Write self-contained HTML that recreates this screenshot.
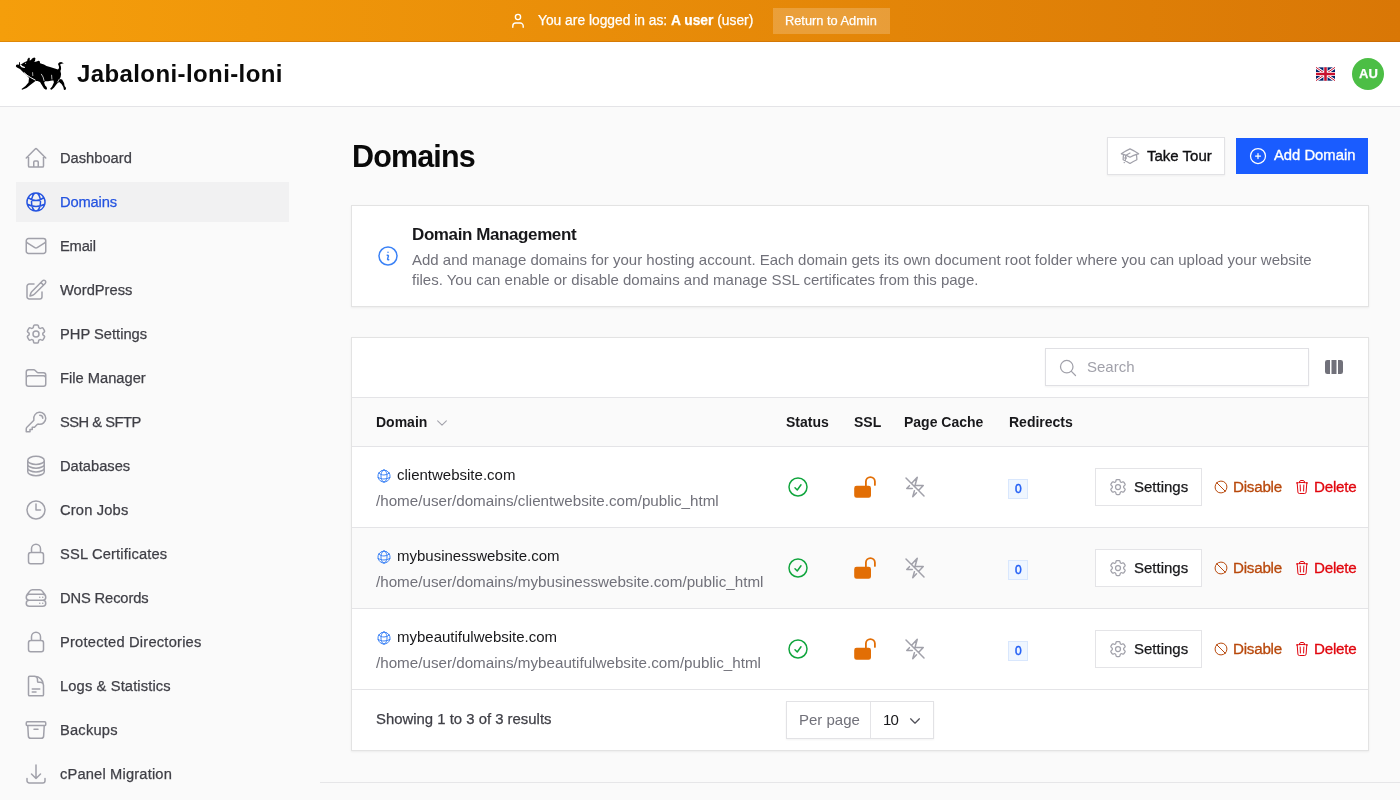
<!DOCTYPE html>
<html><head><meta charset="utf-8"><title>Domains</title>
<style>
*{box-sizing:border-box;margin:0;padding:0}
html,body{width:1400px;height:800px;overflow:hidden}
body{font-family:"Liberation Sans",sans-serif;background:#fafafa;position:relative;color:#18181b}
.a{position:absolute;display:block}
.t{position:absolute;white-space:nowrap;line-height:1;will-change:transform}
</style></head><body>
<div class="a" style="left:0px;top:0px;width:1400px;height:42px;background:linear-gradient(90deg,#f59e0b 0%,#d97706 100%)"></div>
<div class="a" style="left:0px;top:41px;width:1400px;height:1px;background:rgba(160,70,0,.25)"></div>
<svg class="a" style="left:510px;top:12px" width="16" height="17" viewBox="0 0 16 17" fill="none" stroke="#fff" stroke-width="1.4" stroke-linecap="round"><circle cx="8" cy="5" r="2.6"/><path d="M2.8 15.2v-1.2a3 3 0 0 1 3-3h4.4a3 3 0 0 1 3 3v1.2"/></svg>
<div class="t" style="left:538px;top:14.32px;font-size:13.8px;color:#fff;font-weight:normal;letter-spacing:0px;-webkit-text-stroke:0.25px currentColor;">You are logged in as: <b>A user</b> (user)</div>
<div class="a" style="left:773px;top:8px;width:117px;height:26px;background:rgba(255,255,255,.2)"></div>
<div class="t" style="left:785px;top:14.96px;font-size:12.8px;color:#fff;font-weight:normal;letter-spacing:0px;-webkit-text-stroke:0.25px currentColor;">Return to Admin</div>
<div class="a" style="left:0px;top:42px;width:1400px;height:65px;background:#fff;border-bottom:1px solid #e4e4e7"></div>
<svg class="a" style="left:14px;top:54px" width="56" height="40" viewBox="0 0 1120 800">
<path fill="#000" d="M40 225 L60 212 L98 214 L106 160 L118 162 L122 212 L145 205 L200 170 L262 140 L272 100 L300 72 L318 88 L312 128 L340 118 L362 88 L402 68 L428 80 L422 128 L405 160 L450 148 L492 133 L515 147 L522 183 L600 210 L650 238 L720 258 L800 283 L880 308 L902 282 L896 240 L880 202 L902 168 L942 158 L998 186 L950 196 L922 212 L938 252 L942 302 L928 342 L942 400 L932 460 L912 498 L962 508 L1002 578 L1012 638 L1042 678 L1032 716 L1000 722 L986 662 L950 602 L902 562 L862 592 L802 672 L752 716 L720 702 L762 650 L798 572 L790 532 L760 530 L680 545 L620 547 L602 570 L622 630 L652 660 L662 700 L640 716 L600 692 L550 612 L520 562 L470 542 L430 542 L350 602 L250 680 L162 716 L150 702 L230 640 L290 570 L300 482 L250 422 L190 372 L120 302 L60 272 L38 250 Z"/>
<path fill="none" stroke="#fff" stroke-width="28" stroke-linecap="round" d="M132 222 Q150 262 205 268"/>
<circle cx="232" cy="186" r="11" fill="#fff"/>
<path fill="none" stroke="#fff" stroke-width="20" stroke-linecap="round" d="M205 375 L262 425 L335 472 L425 522"/>
<path fill="none" stroke="#fff" stroke-width="15" stroke-linecap="round" d="M548 405 L582 462 L600 530"/>
<path fill="none" stroke="#fff" stroke-width="14" stroke-linecap="round" d="M752 425 L758 500"/>
<path fill="none" stroke="#fff" stroke-width="13" stroke-linecap="round" d="M372 372 L376 432"/>
<path fill="none" stroke="#fff" stroke-width="14" stroke-linecap="round" d="M905 505 L872 560"/>
</svg>
<div class="t" style="left:76.5px;top:61.68px;font-size:24px;color:#0a0a0a;font-weight:bold;letter-spacing:0.4px;">Jabaloni-loni-loni</div>
<svg class="a" style="left:1316px;top:67px" width="19" height="14" viewBox="0 0 60 42"><rect width="60" height="42" fill="#012169"/><path d="M0 0L60 42M60 0L0 42" stroke="#fff" stroke-width="9"/><path d="M0 0L60 42M60 0L0 42" stroke="#C8102E" stroke-width="3"/><path d="M30 0V42M0 21H60" stroke="#fff" stroke-width="13"/><path d="M30 0V42M0 21H60" stroke="#C8102E" stroke-width="8"/></svg>
<div class="a" style="left:1352px;top:58px;width:32px;height:32px;background:#4cbe45;border-radius:50%"></div>
<div class="t" style="left:1358.5px;top:67.00px;font-size:13px;color:#fff;font-weight:bold;letter-spacing:0px;-webkit-text-stroke:0.25px currentColor;">AU</div>
<svg class="a" style="left:24px;top:146px;" width="24" height="24" viewBox="0 0 24 24" fill="none" stroke="#a1a1aa" stroke-width="1.5" stroke-linecap="round" stroke-linejoin="round"><path d="m2.25 12 8.954-8.955c.44-.439 1.152-.439 1.591 0L21.75 12M4.5 9.75v10.125c0 .621.504 1.125 1.125 1.125H9.750v-4.875c0-.621.504-1.125 1.125-1.125h2.25c.621 0 1.125.504 1.125 1.125V21h4.125c.621 0 1.125-.504 1.125-1.125V9.75M8.25 21h8.25"/></svg>
<div class="t" style="left:59.5px;top:150.56px;font-size:14.7px;color:#3f3f46;font-weight:normal;letter-spacing:0px;-webkit-text-stroke:0.25px currentColor;">Dashboard</div>
<div class="a" style="left:16px;top:182px;width:273px;height:40px;background:#f1f1f2"></div>
<svg class="a" style="left:24px;top:190px;" width="24" height="24" viewBox="0 0 24 24" fill="none" stroke="#2453e0" stroke-width="1.5" stroke-linecap="round" stroke-linejoin="round"><path d="M12 21a9.004 9.004 0 0 0 8.716-6.747M12 21a9.004 9.004 0 0 1-8.716-6.747M12 21c2.485 0 4.5-4.03 4.5-9S14.485 3 12 3m0 18c-2.485 0-4.5-4.030-4.5-9S9.515 3 12 3m0 0a8.997 8.997 0 0 1 7.843 4.582M12 3a8.997 8.997 0 0 0-7.843 4.582m15.686 0A11.953 11.953 0 0 1 12 10.5c-2.998 0-5.740-1.1-7.843-2.918m15.686 0A8.959 8.959 0 0 1 21 12c0 .778-.099 1.533-.284 2.253m0 0A17.919 17.919 0 0 1 12 16.5c-3.162 0-6.133-.815-8.716-2.247m0 0A9.015 9.015 0 0 1 3 12c0-1.605.42-3.113 1.157-4.418"/></svg>
<div class="t" style="left:59.5px;top:194.56px;font-size:14.7px;color:#2453e0;font-weight:normal;letter-spacing:-0.14px;-webkit-text-stroke:0.25px currentColor;">Domains</div>
<svg class="a" style="left:24px;top:234px;" width="24" height="24" viewBox="0 0 24 24" fill="none" stroke="#a1a1aa" stroke-width="1.5" stroke-linecap="round" stroke-linejoin="round"><path d="M21.75 6.75v10.5a2.25 2.25 0 0 1-2.25 2.25h-15a2.25 2.25 0 0 1-2.25-2.25V6.75m19.5 0A2.25 2.25 0 0 0 19.5 4.5h-15a2.25 2.25 0 0 0-2.25 2.25m19.5 0v.243a2.25 2.25 0 0 1-1.07 1.916l-7.5 4.615a2.25 2.25 0 0 1-2.36 0L3.32 8.91a2.25 2.25 0 0 1-1.07-1.916V6.75"/></svg>
<div class="t" style="left:59.5px;top:238.56px;font-size:14.7px;color:#3f3f46;font-weight:normal;letter-spacing:-0.2px;-webkit-text-stroke:0.25px currentColor;">Email</div>
<svg class="a" style="left:24px;top:278px;" width="24" height="24" viewBox="0 0 24 24" fill="none" stroke="#a1a1aa" stroke-width="1.5" stroke-linecap="round" stroke-linejoin="round"><path d="m16.862 4.487 1.687-1.688a1.875 1.875 0 1 1 2.652 2.652L10.582 16.07a4.5 4.5 0 0 1-1.897 1.13L6 18l.8-2.685a4.5 4.5 0 0 1 1.13-1.897l8.932-8.931Zm0 0L19.5 7.125M18 14v4.75A2.25 2.25 0 0 1 15.75 21H5.25A2.25 2.25 0 0 1 3 18.75V8.25A2.25 2.25 0 0 1 5.25 6H10"/></svg>
<div class="t" style="left:59.5px;top:282.56px;font-size:14.7px;color:#3f3f46;font-weight:normal;letter-spacing:0px;-webkit-text-stroke:0.25px currentColor;">WordPress</div>
<svg class="a" style="left:24px;top:322px;" width="24" height="24" viewBox="0 0 24 24" fill="none" stroke="#a1a1aa" stroke-width="1.5" stroke-linecap="round" stroke-linejoin="round"><path d="M9.594 3.94c.09-.542.56-.94 1.11-.94h2.593c.55 0 1.02.398 1.11.94l.213 1.281c.063.374.313.686.645.87.074.04.147.083.22.127.325.196.72.257 1.075.124l1.217-.456a1.125 1.125 0 0 1 1.37.49l1.296 2.247a1.125 1.125 0 0 1-.26 1.431l-1.003.827c-.293.241-.438.613-.43.992a7.723 7.723 0 0 1 0 .255c-.008.378.137.75.43.991l1.004.827c.424.35.534.955.26 1.43l-1.298 2.247a1.125 1.125 0 0 1-1.369.491l-1.217-.456c-.355-.133-.75-.072-1.076.124a6.47 6.47 0 0 1-.22.128c-.331.183-.581.495-.644.869l-.213 1.281c-.09.543-.56.94-1.110.94h-2.594c-.55 0-1.019-.398-1.11-.94l-.213-1.281c-.062-.374-.312-.686-.644-.87a6.52 6.52 0 0 1-.22-.127c-.325-.196-.72-.257-1.076-.124l-1.217.456a1.125 1.125 0 0 1-1.369-.49l-1.297-2.247a1.125 1.125 0 0 1 .26-1.431l1.004-.827c.292-.24.437-.613.43-.991a6.932 6.932 0 0 1 0-.255c.007-.38-.138-.751-.43-.992l-1.004-.827a1.125 1.125 0 0 1-.26-1.43l1.297-2.247a1.125 1.125 0 0 1 1.37-.491l1.216.456c.356.133.751.072 1.076-.124.072-.044.146-.086.22-.128.332-.183.582-.495.644-.869l.214-1.28Z M15 12a3 3 0 1 1-6 0 3 3 0 0 1 6 0Z"/></svg>
<div class="t" style="left:59.5px;top:326.56px;font-size:14.7px;color:#3f3f46;font-weight:normal;letter-spacing:0px;-webkit-text-stroke:0.25px currentColor;">PHP Settings</div>
<svg class="a" style="left:24px;top:366px;" width="24" height="24" viewBox="0 0 24 24" fill="none" stroke="#a1a1aa" stroke-width="1.5" stroke-linecap="round" stroke-linejoin="round"><path d="M2.25 12.75V12A2.25 2.25 0 0 1 4.5 9.75h15A2.25 2.25 0 0 1 21.75 12v.75m-8.69-6.44-2.12-2.12a1.5 1.5 0 0 0-1.061-.44H4.5A2.25 2.25 0 0 0 2.25 6v12a2.25 2.25 0 0 0 2.25 2.25h15A2.25 2.25 0 0 0 21.75 18V9a2.25 2.25 0 0 0-2.25-2.25h-5.379a1.5 1.5 0 0 1-1.06-.44Z"/></svg>
<div class="t" style="left:59.5px;top:370.56px;font-size:14.7px;color:#3f3f46;font-weight:normal;letter-spacing:0px;-webkit-text-stroke:0.25px currentColor;">File Manager</div>
<svg class="a" style="left:24px;top:410px;" width="24" height="24" viewBox="0 0 24 24" fill="none" stroke="#a1a1aa" stroke-width="1.5" stroke-linecap="round" stroke-linejoin="round"><path d="M15.75 5.25a3 3 0 0 1 3 3m3 0a6 6 0 0 1-7.029 5.912c-.563-.097-1.159.026-1.563.43L10.5 17.25H8.25v2.25H6v2.25H2.25v-2.818c0-.597.237-1.17.659-1.591l6.499-6.499c.404-.404.527-1 .43-1.563A6 6 0 1 1 21.75 8.25Z"/></svg>
<div class="t" style="left:59.5px;top:414.56px;font-size:14.7px;color:#3f3f46;font-weight:normal;letter-spacing:-0.5px;-webkit-text-stroke:0.25px currentColor;">SSH &amp; SFTP</div>
<svg class="a" style="left:24px;top:454px;" width="24" height="24" viewBox="0 0 24 24" fill="none" stroke="#a1a1aa" stroke-width="1.5" stroke-linecap="round" stroke-linejoin="round"><path d="M20.25 6.375c0 2.278-3.694 4.125-8.25 4.125S3.75 8.653 3.75 6.375m16.5 0c0-2.278-3.694-4.125-8.25-4.125S3.75 4.097 3.75 6.375m16.5 0v11.25c0 2.278-3.694 4.125-8.25 4.125s-8.25-1.847-8.25-4.125V6.375m16.5 0v3.75m-16.5-3.75v3.75m16.5 0v3.75C20.25 16.153 16.556 18 12 18s-8.25-1.847-8.25-4.125v-3.75m16.5 0c0 2.278-3.694 4.125-8.25 4.125s-8.25-1.847-8.25-4.125"/></svg>
<div class="t" style="left:59.5px;top:458.56px;font-size:14.7px;color:#3f3f46;font-weight:normal;letter-spacing:0px;-webkit-text-stroke:0.25px currentColor;">Databases</div>
<svg class="a" style="left:24px;top:498px;" width="24" height="24" viewBox="0 0 24 24" fill="none" stroke="#a1a1aa" stroke-width="1.5" stroke-linecap="round" stroke-linejoin="round"><path d="M12 6v6h4.5m4.5 0a9 9 0 1 1-18 0 9 9 0 0 1 18 0Z"/></svg>
<div class="t" style="left:59.5px;top:502.56px;font-size:14.7px;color:#3f3f46;font-weight:normal;letter-spacing:0.17px;-webkit-text-stroke:0.25px currentColor;">Cron Jobs</div>
<svg class="a" style="left:24px;top:542px;" width="24" height="24" viewBox="0 0 24 24" fill="none" stroke="#a1a1aa" stroke-width="1.5" stroke-linecap="round" stroke-linejoin="round"><path d="M16.5 10.5V6.75a4.5 4.5 0 1 0-9 0v3.75m-.75 11.25h10.5a2.25 2.25 0 0 0 2.25-2.25v-6.75a2.25 2.25 0 0 0-2.25-2.25H6.75a2.25 2.25 0 0 0-2.25 2.25v6.75a2.25 2.25 0 0 0 2.25 2.25Z"/></svg>
<div class="t" style="left:59.5px;top:546.56px;font-size:14.7px;color:#3f3f46;font-weight:normal;letter-spacing:0.16px;-webkit-text-stroke:0.25px currentColor;">SSL Certificates</div>
<svg class="a" style="left:24px;top:586px;" width="24" height="24" viewBox="0 0 24 24" fill="none" stroke="#a1a1aa" stroke-width="1.5" stroke-linecap="round" stroke-linejoin="round"><path d="M5.25 14.25h13.5m-13.5 0a3 3 0 0 1-3-3m3 3a3 3 0 1 0 0 6h13.5a3 3 0 1 0 0-6m-16.5-3a3 3 0 0 1 3-3h13.5a3 3 0 0 1 3 3m-19.5 0a4.5 4.5 0 0 1 .9-2.7L5.737 5.1a3.375 3.375 0 0 1 2.7-1.35h7.126c1.062 0 2.062.5 2.7 1.35l2.587 3.45a4.5 4.5 0 0 1 .9 2.7m0 0a3 3 0 0 1-3 3m0 3h.008v.008h-.008v-.008Zm0-6h.008v.008h-.008v-.008Zm-3 6h.008v.008h-.008v-.008Zm0-6h.008v.008h-.008v-.008Z"/></svg>
<div class="t" style="left:59.5px;top:590.56px;font-size:14.7px;color:#3f3f46;font-weight:normal;letter-spacing:-0.12px;-webkit-text-stroke:0.25px currentColor;">DNS Records</div>
<svg class="a" style="left:24px;top:630px;" width="24" height="24" viewBox="0 0 24 24" fill="none" stroke="#a1a1aa" stroke-width="1.5" stroke-linecap="round" stroke-linejoin="round"><path d="M16.5 10.5V6.75a4.5 4.5 0 1 0-9 0v3.75m-.75 11.25h10.5a2.25 2.25 0 0 0 2.25-2.25v-6.75a2.25 2.25 0 0 0-2.25-2.25H6.75a2.25 2.25 0 0 0-2.25 2.25v6.75a2.25 2.25 0 0 0 2.25 2.25Z"/></svg>
<div class="t" style="left:59.5px;top:634.56px;font-size:14.7px;color:#3f3f46;font-weight:normal;letter-spacing:0.21px;-webkit-text-stroke:0.25px currentColor;">Protected Directories</div>
<svg class="a" style="left:24px;top:674px;" width="24" height="24" viewBox="0 0 24 24" fill="none" stroke="#a1a1aa" stroke-width="1.5" stroke-linecap="round" stroke-linejoin="round"><path d="M19.5 14.25v-2.625a3.375 3.375 0 0 0-3.375-3.375h-1.5A1.125 1.125 0 0 1 13.5 7.125v-1.5a3.375 3.375 0 0 0-3.375-3.375H8.25m0 12.75h7.5m-7.5 3H12M10.5 2.25H5.625c-.621 0-1.125.504-1.125 1.125v17.25c0 .621.504 1.125 1.125 1.125h12.75c.621 0 1.125-.504 1.125-1.125V11.25a9 9 0 0 0-9-9Z"/></svg>
<div class="t" style="left:59.5px;top:678.56px;font-size:14.7px;color:#3f3f46;font-weight:normal;letter-spacing:0.13px;-webkit-text-stroke:0.25px currentColor;">Logs &amp; Statistics</div>
<svg class="a" style="left:24px;top:718px;" width="24" height="24" viewBox="0 0 24 24" fill="none" stroke="#a1a1aa" stroke-width="1.5" stroke-linecap="round" stroke-linejoin="round"><path d="m20.25 7.5-.625 10.632a2.25 2.25 0 0 1-2.247 2.118H6.622a2.25 2.25 0 0 1-2.247-2.118L3.75 7.5M10 11.25h4M3.375 7.5h17.25c.621 0 1.125-.504 1.125-1.125v-1.5c0-.621-.504-1.125-1.125-1.125H3.375c-.621 0-1.125.504-1.125 1.125v1.5c0 .621.504 1.125 1.125 1.125Z"/></svg>
<div class="t" style="left:59.5px;top:722.56px;font-size:14.7px;color:#3f3f46;font-weight:normal;letter-spacing:0.19px;-webkit-text-stroke:0.25px currentColor;">Backups</div>
<svg class="a" style="left:24px;top:762px;" width="24" height="24" viewBox="0 0 24 24" fill="none" stroke="#a1a1aa" stroke-width="1.5" stroke-linecap="round" stroke-linejoin="round"><path d="M3 16.5v2.25A2.25 2.25 0 0 0 5.25 21h13.5A2.25 2.25 0 0 0 21 18.75V16.5M16.5 12 12 16.5m0 0L7.5 12m4.5 4.5V3"/></svg>
<div class="t" style="left:59.5px;top:766.56px;font-size:14.7px;color:#3f3f46;font-weight:normal;letter-spacing:0.16px;-webkit-text-stroke:0.25px currentColor;">cPanel Migration</div>
<div class="t" style="left:351.5px;top:141.18px;font-size:30.5px;color:#0a0a0a;font-weight:bold;letter-spacing:-0.85px;">Domains</div>
<div class="a" style="left:1107px;top:137px;width:118px;height:38px;background:#fff;border:1px solid #e2e2e5;box-shadow:0 1px 2px rgba(0,0,0,.05)"></div>
<svg class="a" style="left:1120px;top:146px;" width="20" height="20" viewBox="0 0 24 24" fill="none" stroke="#a1a1aa" stroke-width="1.5" stroke-linecap="round" stroke-linejoin="round"><path d="M4.26 10.147a60.438 60.438 0 0 0-.491 6.347A48.62 48.62 0 0 1 12 20.904a48.62 48.62 0 0 1 8.232-4.41 60.46 60.46 0 0 0-.491-6.347m-15.482 0a50.636 50.636 0 0 0-2.658-.813A59.906 59.906 0 0 1 12 3.493a59.903 59.903 0 0 1 10.399 5.84c-.896.248-1.783.52-2.658.814m-15.482 0A50.717 50.717 0 0 1 12 13.489a50.702 50.702 0 0 1 7.740-3.342M6.75 15a.75.75 0 1 0 0-1.5.75.75 0 0 0 0 1.5Zm0 0v-3.675A55.378 55.378 0 0 1 12 8.443m-7.007 11.55A5.981 5.981 0 0 0 6.75 15.75v-1.5"/></svg>
<div class="t" style="left:1146.5px;top:148.30px;font-size:15px;color:#0f0f12;font-weight:normal;letter-spacing:0px;-webkit-text-stroke:0.35px currentColor;">Take Tour</div>
<div class="a" style="left:1236px;top:138px;width:132px;height:36px;background:#1a5cff"></div>
<svg class="a" style="left:1248px;top:146px;" width="20" height="20" viewBox="0 0 24 24" fill="none" stroke="#fff" stroke-width="1.5" stroke-linecap="round" stroke-linejoin="round"><path d="M12 9v6m3-3H9m12 0a9 9 0 1 1-18 0 9 9 0 0 1 18 0Z"/></svg>
<div class="t" style="left:1274px;top:148.47px;font-size:14.8px;color:#fff;font-weight:normal;letter-spacing:0px;-webkit-text-stroke:0.35px currentColor;">Add Domain</div>
<div class="a" style="left:351px;top:205px;width:1018px;height:102px;background:#fff;border:1px solid #e3e3e3;box-shadow:0 1px 2px rgba(0,0,0,.06)"></div>
<svg class="a" style="left:376px;top:244px;" width="24" height="24" viewBox="0 0 24 24" fill="none" stroke="#3b82f6" stroke-width="1.5" stroke-linecap="round" stroke-linejoin="round"><path d="m11.25 11.25.041-.02a.75.75 0 0 1 1.063.852l-.708 2.836a.75.75 0 0 0 1.063.853l.041-.021M21 12a9 9 0 1 1-18 0 9 9 0 0 1 18 0Zm-9-3.75h.008v.008H12V8.25Z"/></svg>
<div class="t" style="left:412px;top:226.11px;font-size:17px;color:#18181b;font-weight:bold;letter-spacing:-0.4px;">Domain Management</div>
<div class="t" style="left:412px;top:252.30px;font-size:15px;color:#71717a;font-weight:normal;letter-spacing:0px;">Add and manage domains for your hosting account. Each domain gets its own document root folder where you can upload your website</div>
<div class="t" style="left:412px;top:272.30px;font-size:15px;color:#71717a;font-weight:normal;letter-spacing:0px;">files. You can enable or disable domains and manage SSL certificates from this page.</div>
<div class="a" style="left:351px;top:337px;width:1018px;height:414px;background:#fff;border:1px solid #e3e3e3;box-shadow:0 1px 2px rgba(0,0,0,.06)"></div>
<div class="a" style="left:1045px;top:348px;width:264px;height:38px;background:#fff;border:1px solid #e0e0e4;box-shadow:0 1px 2px rgba(0,0,0,.05)"></div>
<svg class="a" style="left:1058px;top:358px;" width="20" height="20" viewBox="0 0 24 24" fill="none" stroke="#a1a1aa" stroke-width="1.5" stroke-linecap="round" stroke-linejoin="round"><path d="m21 21-5.197-5.197m0 0A7.5 7.5 0 1 0 5.196 5.196a7.5 7.5 0 0 0 10.607 10.607Z"/></svg>
<div class="t" style="left:1086.5px;top:359.30px;font-size:15px;color:#a1a1aa;font-weight:normal;letter-spacing:0px;">Search</div>
<svg class="a" style="left:1324px;top:357px;" width="20" height="20" viewBox="0 0 20 20" fill="#71717a"><path fill-rule="evenodd" clip-rule="evenodd" d="M14 17h2.75A2.25 2.25 0 0 0 19 14.75v-9.5A2.25 2.25 0 0 0 16.75 3H14v14ZM12.5 3h-5v14h5V3ZM3.25 3H6v14H3.25A2.25 2.25 0 0 1 1 14.75v-9.5A2.25 2.25 0 0 1 3.25 3Z"/></svg>
<div class="a" style="left:352px;top:397px;width:1016px;height:50px;background:#fafafa;border-top:1px solid #e4e4e7;border-bottom:1px solid #e4e4e7"></div>
<div class="t" style="left:376px;top:415.15px;font-size:14px;color:#18181b;font-weight:bold;letter-spacing:0px;">Domain</div>
<svg class="a" style="left:435px;top:416px;" width="14" height="14" viewBox="0 0 24 24" fill="none" stroke="#a1a1aa" stroke-width="1.8" stroke-linecap="round" stroke-linejoin="round"><path d="m19.5 8.25-7.5 7.5-7.5-7.5"/></svg>
<div class="t" style="left:785.5px;top:415.15px;font-size:14px;color:#18181b;font-weight:bold;letter-spacing:0px;">Status</div>
<div class="t" style="left:853.5px;top:415.15px;font-size:14px;color:#18181b;font-weight:bold;letter-spacing:0px;">SSL</div>
<div class="t" style="left:903.5px;top:415.15px;font-size:14px;color:#18181b;font-weight:bold;letter-spacing:0px;">Page Cache</div>
<div class="t" style="left:1008.5px;top:415.15px;font-size:14px;color:#18181b;font-weight:bold;letter-spacing:0px;">Redirects</div>
<svg class="a" style="left:376px;top:468px;" width="16" height="16" viewBox="0 0 24 24" fill="none" stroke="#3b82f6" stroke-width="1.5" stroke-linecap="round" stroke-linejoin="round"><path d="M12 21a9.004 9.004 0 0 0 8.716-6.747M12 21a9.004 9.004 0 0 1-8.716-6.747M12 21c2.485 0 4.5-4.03 4.5-9S14.485 3 12 3m0 18c-2.485 0-4.5-4.030-4.5-9S9.515 3 12 3m0 0a8.997 8.997 0 0 1 7.843 4.582M12 3a8.997 8.997 0 0 0-7.843 4.582m15.686 0A11.953 11.953 0 0 1 12 10.5c-2.998 0-5.740-1.1-7.843-2.918m15.686 0A8.959 8.959 0 0 1 21 12c0 .778-.099 1.533-.284 2.253m0 0A17.919 17.919 0 0 1 12 16.5c-3.162 0-6.133-.815-8.716-2.247m0 0A9.015 9.015 0 0 1 3 12c0-1.605.42-3.113 1.157-4.418"/></svg>
<div class="t" style="left:396.5px;top:467.30px;font-size:15px;color:#18181b;font-weight:normal;letter-spacing:0px;">clientwebsite.com</div>
<div class="t" style="left:376px;top:492.93px;font-size:15.2px;color:#71717a;font-weight:normal;letter-spacing:0px;">/home/user/domains/clientwebsite.com/public_html</div>
<svg class="a" style="left:786px;top:475px;" width="24" height="24" viewBox="0 0 24 24" fill="none" stroke="#10a53d" stroke-width="1.5" stroke-linecap="round" stroke-linejoin="round"><path d="M9 12.75 11.25 15 15 9.75M21 12a9 9 0 1 1-18 0 9 9 0 0 1 18 0Z"/></svg>
<svg class="a" style="left:853px;top:475px;" width="24" height="24" viewBox="0 0 20 20" fill="#e26e05"><path fill-rule="evenodd" clip-rule="evenodd" d="M14.5 1A4.5 4.5 0 0 0 10 5.5V9H3a2 2 0 0 0-2 2v6a2 2 0 0 0 2 2h10a2 2 0 0 0 2-2v-6a2 2 0 0 0-2-2h-1.5V5.5a3 3 0 1 1 6 0v2.75a.75.75 0 0 0 1.5 0V5.5A4.5 4.5 0 0 0 14.5 1Z"/></svg>
<svg class="a" style="left:903px;top:475px;" width="24" height="24" viewBox="0 0 24 24" fill="none" stroke="#a1a1aa" stroke-width="1.5" stroke-linecap="round" stroke-linejoin="round"><path d="M11.412 15.655 9.75 21.75l3.745-4.012M9.257 13.5H3.75l2.659-2.849m2.048-2.194L14.25 2.25 12 10.5h8.25l-4.707 5.043M8.457 8.457 3 3m5.457 5.457 7.086 7.086m0 0L21 21"/></svg>
<div class="a" style="left:1008px;top:479px;width:20px;height:20px;background:#eff6ff;border:1px solid #d9e7fd"></div>
<div class="t" style="left:1014.5px;top:482.84px;font-size:12px;color:#1f5cf5;font-weight:normal;letter-spacing:0px;-webkit-text-stroke:0.45px currentColor;">0</div>
<div class="a" style="left:1095px;top:468px;width:107px;height:38px;background:#fff;border:1px solid #e4e4e7"></div>
<svg class="a" style="left:1108px;top:477px;" width="20" height="20" viewBox="0 0 24 24" fill="none" stroke="#a1a1aa" stroke-width="1.5" stroke-linecap="round" stroke-linejoin="round"><path d="M9.594 3.94c.09-.542.56-.94 1.11-.94h2.593c.55 0 1.02.398 1.11.94l.213 1.281c.063.374.313.686.645.87.074.04.147.083.22.127.325.196.72.257 1.075.124l1.217-.456a1.125 1.125 0 0 1 1.37.49l1.296 2.247a1.125 1.125 0 0 1-.26 1.431l-1.003.827c-.293.241-.438.613-.43.992a7.723 7.723 0 0 1 0 .255c-.008.378.137.75.43.991l1.004.827c.424.35.534.955.26 1.43l-1.298 2.247a1.125 1.125 0 0 1-1.369.491l-1.217-.456c-.355-.133-.75-.072-1.076.124a6.47 6.47 0 0 1-.22.128c-.331.183-.581.495-.644.869l-.213 1.281c-.09.543-.56.94-1.110.94h-2.594c-.55 0-1.019-.398-1.11-.94l-.213-1.281c-.062-.374-.312-.686-.644-.87a6.52 6.52 0 0 1-.22-.127c-.325-.196-.72-.257-1.076-.124l-1.217.456a1.125 1.125 0 0 1-1.369-.49l-1.297-2.247a1.125 1.125 0 0 1 .26-1.431l1.004-.827c.292-.24.437-.613.43-.991a6.932 6.932 0 0 1 0-.255c.007-.38-.138-.751-.43-.992l-1.004-.827a1.125 1.125 0 0 1-.26-1.43l1.297-2.247a1.125 1.125 0 0 1 1.37-.491l1.216.456c.356.133.751.072 1.076-.124.072-.044.146-.086.22-.128.332-.183.582-.495.644-.869l.214-1.28Z M15 12a3 3 0 1 1-6 0 3 3 0 0 1 6 0Z"/></svg>
<div class="t" style="left:1134px;top:479.30px;font-size:15px;color:#18181b;font-weight:normal;letter-spacing:0px;-webkit-text-stroke:0.25px currentColor;">Settings</div>
<svg class="a" style="left:1213px;top:479px;" width="16" height="16" viewBox="0 0 24 24" fill="none" stroke="#b8480b" stroke-width="1.5" stroke-linecap="round" stroke-linejoin="round"><path d="M18.364 18.364A9 9 0 0 0 5.636 5.636m12.728 12.728A9 9 0 0 1 5.636 5.636m12.728 12.728L5.636 5.636"/></svg>
<div class="t" style="left:1232.5px;top:479.13px;font-size:15.2px;color:#b8480b;font-weight:normal;letter-spacing:-0.25px;-webkit-text-stroke:0.3px currentColor;">Disable</div>
<svg class="a" style="left:1294px;top:479px;" width="16" height="16" viewBox="0 0 24 24" fill="none" stroke="#e1060e" stroke-width="1.5" stroke-linecap="round" stroke-linejoin="round"><path d="m14.74 9-.346 9m-4.788 0L9.26 9m9.968-3.21c.342.052.682.107 1.022.166m-1.022-.165L18.16 19.673a2.25 2.25 0 0 1-2.244 2.077H8.084a2.25 2.25 0 0 1-2.244-2.077L4.772 5.79m14.456 0a48.108 48.108 0 0 0-3.478-.397m-12 .562c.34-.059.68-.114 1.022-.165m0 0a48.11 48.11 0 0 1 3.478-.397m7.5 0v-.916c0-1.18-.91-2.164-2.09-2.201a51.964 51.964 0 0 0-3.32 0c-1.18.037-2.09 1.022-2.09 2.201v.916m7.5 0a48.667 48.667 0 0 0-7.5 0"/></svg>
<div class="t" style="left:1314px;top:479.13px;font-size:15.2px;color:#e1060e;font-weight:normal;letter-spacing:-0.25px;-webkit-text-stroke:0.3px currentColor;">Delete</div>
<div class="a" style="left:352px;top:527px;width:1016px;height:81px;background:#fafafa"></div>
<div class="a" style="left:352px;top:527px;width:1016px;height:1px;background:#e4e4e7"></div>
<svg class="a" style="left:376px;top:549px;" width="16" height="16" viewBox="0 0 24 24" fill="none" stroke="#3b82f6" stroke-width="1.5" stroke-linecap="round" stroke-linejoin="round"><path d="M12 21a9.004 9.004 0 0 0 8.716-6.747M12 21a9.004 9.004 0 0 1-8.716-6.747M12 21c2.485 0 4.5-4.03 4.5-9S14.485 3 12 3m0 18c-2.485 0-4.5-4.030-4.5-9S9.515 3 12 3m0 0a8.997 8.997 0 0 1 7.843 4.582M12 3a8.997 8.997 0 0 0-7.843 4.582m15.686 0A11.953 11.953 0 0 1 12 10.5c-2.998 0-5.740-1.1-7.843-2.918m15.686 0A8.959 8.959 0 0 1 21 12c0 .778-.099 1.533-.284 2.253m0 0A17.919 17.919 0 0 1 12 16.5c-3.162 0-6.133-.815-8.716-2.247m0 0A9.015 9.015 0 0 1 3 12c0-1.605.42-3.113 1.157-4.418"/></svg>
<div class="t" style="left:396.5px;top:548.30px;font-size:15px;color:#18181b;font-weight:normal;letter-spacing:0px;">mybusinesswebsite.com</div>
<div class="t" style="left:376px;top:573.93px;font-size:15.2px;color:#71717a;font-weight:normal;letter-spacing:0px;">/home/user/domains/mybusinesswebsite.com/public_html</div>
<svg class="a" style="left:786px;top:556px;" width="24" height="24" viewBox="0 0 24 24" fill="none" stroke="#10a53d" stroke-width="1.5" stroke-linecap="round" stroke-linejoin="round"><path d="M9 12.75 11.25 15 15 9.75M21 12a9 9 0 1 1-18 0 9 9 0 0 1 18 0Z"/></svg>
<svg class="a" style="left:853px;top:556px;" width="24" height="24" viewBox="0 0 20 20" fill="#e26e05"><path fill-rule="evenodd" clip-rule="evenodd" d="M14.5 1A4.5 4.5 0 0 0 10 5.5V9H3a2 2 0 0 0-2 2v6a2 2 0 0 0 2 2h10a2 2 0 0 0 2-2v-6a2 2 0 0 0-2-2h-1.5V5.5a3 3 0 1 1 6 0v2.75a.75.75 0 0 0 1.5 0V5.5A4.5 4.5 0 0 0 14.5 1Z"/></svg>
<svg class="a" style="left:903px;top:556px;" width="24" height="24" viewBox="0 0 24 24" fill="none" stroke="#a1a1aa" stroke-width="1.5" stroke-linecap="round" stroke-linejoin="round"><path d="M11.412 15.655 9.75 21.75l3.745-4.012M9.257 13.5H3.75l2.659-2.849m2.048-2.194L14.25 2.25 12 10.5h8.25l-4.707 5.043M8.457 8.457 3 3m5.457 5.457 7.086 7.086m0 0L21 21"/></svg>
<div class="a" style="left:1008px;top:560px;width:20px;height:20px;background:#eff6ff;border:1px solid #d9e7fd"></div>
<div class="t" style="left:1014.5px;top:563.84px;font-size:12px;color:#1f5cf5;font-weight:normal;letter-spacing:0px;-webkit-text-stroke:0.45px currentColor;">0</div>
<div class="a" style="left:1095px;top:549px;width:107px;height:38px;background:#fff;border:1px solid #e4e4e7"></div>
<svg class="a" style="left:1108px;top:558px;" width="20" height="20" viewBox="0 0 24 24" fill="none" stroke="#a1a1aa" stroke-width="1.5" stroke-linecap="round" stroke-linejoin="round"><path d="M9.594 3.94c.09-.542.56-.94 1.11-.94h2.593c.55 0 1.02.398 1.11.94l.213 1.281c.063.374.313.686.645.87.074.04.147.083.22.127.325.196.72.257 1.075.124l1.217-.456a1.125 1.125 0 0 1 1.37.49l1.296 2.247a1.125 1.125 0 0 1-.26 1.431l-1.003.827c-.293.241-.438.613-.43.992a7.723 7.723 0 0 1 0 .255c-.008.378.137.75.43.991l1.004.827c.424.35.534.955.26 1.43l-1.298 2.247a1.125 1.125 0 0 1-1.369.491l-1.217-.456c-.355-.133-.75-.072-1.076.124a6.47 6.47 0 0 1-.22.128c-.331.183-.581.495-.644.869l-.213 1.281c-.09.543-.56.94-1.110.94h-2.594c-.55 0-1.019-.398-1.11-.94l-.213-1.281c-.062-.374-.312-.686-.644-.87a6.52 6.52 0 0 1-.22-.127c-.325-.196-.72-.257-1.076-.124l-1.217.456a1.125 1.125 0 0 1-1.369-.49l-1.297-2.247a1.125 1.125 0 0 1 .26-1.431l1.004-.827c.292-.24.437-.613.43-.991a6.932 6.932 0 0 1 0-.255c.007-.38-.138-.751-.43-.992l-1.004-.827a1.125 1.125 0 0 1-.26-1.43l1.297-2.247a1.125 1.125 0 0 1 1.37-.491l1.216.456c.356.133.751.072 1.076-.124.072-.044.146-.086.22-.128.332-.183.582-.495.644-.869l.214-1.28Z M15 12a3 3 0 1 1-6 0 3 3 0 0 1 6 0Z"/></svg>
<div class="t" style="left:1134px;top:560.30px;font-size:15px;color:#18181b;font-weight:normal;letter-spacing:0px;-webkit-text-stroke:0.25px currentColor;">Settings</div>
<svg class="a" style="left:1213px;top:560px;" width="16" height="16" viewBox="0 0 24 24" fill="none" stroke="#b8480b" stroke-width="1.5" stroke-linecap="round" stroke-linejoin="round"><path d="M18.364 18.364A9 9 0 0 0 5.636 5.636m12.728 12.728A9 9 0 0 1 5.636 5.636m12.728 12.728L5.636 5.636"/></svg>
<div class="t" style="left:1232.5px;top:560.13px;font-size:15.2px;color:#b8480b;font-weight:normal;letter-spacing:-0.25px;-webkit-text-stroke:0.3px currentColor;">Disable</div>
<svg class="a" style="left:1294px;top:560px;" width="16" height="16" viewBox="0 0 24 24" fill="none" stroke="#e1060e" stroke-width="1.5" stroke-linecap="round" stroke-linejoin="round"><path d="m14.74 9-.346 9m-4.788 0L9.26 9m9.968-3.21c.342.052.682.107 1.022.166m-1.022-.165L18.16 19.673a2.25 2.25 0 0 1-2.244 2.077H8.084a2.25 2.25 0 0 1-2.244-2.077L4.772 5.79m14.456 0a48.108 48.108 0 0 0-3.478-.397m-12 .562c.34-.059.68-.114 1.022-.165m0 0a48.11 48.11 0 0 1 3.478-.397m7.5 0v-.916c0-1.18-.91-2.164-2.09-2.201a51.964 51.964 0 0 0-3.32 0c-1.18.037-2.09 1.022-2.09 2.201v.916m7.5 0a48.667 48.667 0 0 0-7.5 0"/></svg>
<div class="t" style="left:1314px;top:560.13px;font-size:15.2px;color:#e1060e;font-weight:normal;letter-spacing:-0.25px;-webkit-text-stroke:0.3px currentColor;">Delete</div>
<div class="a" style="left:352px;top:608px;width:1016px;height:1px;background:#e4e4e7"></div>
<svg class="a" style="left:376px;top:630px;" width="16" height="16" viewBox="0 0 24 24" fill="none" stroke="#3b82f6" stroke-width="1.5" stroke-linecap="round" stroke-linejoin="round"><path d="M12 21a9.004 9.004 0 0 0 8.716-6.747M12 21a9.004 9.004 0 0 1-8.716-6.747M12 21c2.485 0 4.5-4.03 4.5-9S14.485 3 12 3m0 18c-2.485 0-4.5-4.030-4.5-9S9.515 3 12 3m0 0a8.997 8.997 0 0 1 7.843 4.582M12 3a8.997 8.997 0 0 0-7.843 4.582m15.686 0A11.953 11.953 0 0 1 12 10.5c-2.998 0-5.740-1.1-7.843-2.918m15.686 0A8.959 8.959 0 0 1 21 12c0 .778-.099 1.533-.284 2.253m0 0A17.919 17.919 0 0 1 12 16.5c-3.162 0-6.133-.815-8.716-2.247m0 0A9.015 9.015 0 0 1 3 12c0-1.605.42-3.113 1.157-4.418"/></svg>
<div class="t" style="left:396.5px;top:629.30px;font-size:15px;color:#18181b;font-weight:normal;letter-spacing:0px;">mybeautifulwebsite.com</div>
<div class="t" style="left:376px;top:654.93px;font-size:15.2px;color:#71717a;font-weight:normal;letter-spacing:0px;">/home/user/domains/mybeautifulwebsite.com/public_html</div>
<svg class="a" style="left:786px;top:637px;" width="24" height="24" viewBox="0 0 24 24" fill="none" stroke="#10a53d" stroke-width="1.5" stroke-linecap="round" stroke-linejoin="round"><path d="M9 12.75 11.25 15 15 9.75M21 12a9 9 0 1 1-18 0 9 9 0 0 1 18 0Z"/></svg>
<svg class="a" style="left:853px;top:637px;" width="24" height="24" viewBox="0 0 20 20" fill="#e26e05"><path fill-rule="evenodd" clip-rule="evenodd" d="M14.5 1A4.5 4.5 0 0 0 10 5.5V9H3a2 2 0 0 0-2 2v6a2 2 0 0 0 2 2h10a2 2 0 0 0 2-2v-6a2 2 0 0 0-2-2h-1.5V5.5a3 3 0 1 1 6 0v2.75a.75.75 0 0 0 1.5 0V5.5A4.5 4.5 0 0 0 14.5 1Z"/></svg>
<svg class="a" style="left:903px;top:637px;" width="24" height="24" viewBox="0 0 24 24" fill="none" stroke="#a1a1aa" stroke-width="1.5" stroke-linecap="round" stroke-linejoin="round"><path d="M11.412 15.655 9.75 21.75l3.745-4.012M9.257 13.5H3.75l2.659-2.849m2.048-2.194L14.25 2.25 12 10.5h8.25l-4.707 5.043M8.457 8.457 3 3m5.457 5.457 7.086 7.086m0 0L21 21"/></svg>
<div class="a" style="left:1008px;top:641px;width:20px;height:20px;background:#eff6ff;border:1px solid #d9e7fd"></div>
<div class="t" style="left:1014.5px;top:644.84px;font-size:12px;color:#1f5cf5;font-weight:normal;letter-spacing:0px;-webkit-text-stroke:0.45px currentColor;">0</div>
<div class="a" style="left:1095px;top:630px;width:107px;height:38px;background:#fff;border:1px solid #e4e4e7"></div>
<svg class="a" style="left:1108px;top:639px;" width="20" height="20" viewBox="0 0 24 24" fill="none" stroke="#a1a1aa" stroke-width="1.5" stroke-linecap="round" stroke-linejoin="round"><path d="M9.594 3.94c.09-.542.56-.94 1.11-.94h2.593c.55 0 1.02.398 1.11.94l.213 1.281c.063.374.313.686.645.87.074.04.147.083.22.127.325.196.72.257 1.075.124l1.217-.456a1.125 1.125 0 0 1 1.37.49l1.296 2.247a1.125 1.125 0 0 1-.26 1.431l-1.003.827c-.293.241-.438.613-.43.992a7.723 7.723 0 0 1 0 .255c-.008.378.137.75.43.991l1.004.827c.424.35.534.955.26 1.43l-1.298 2.247a1.125 1.125 0 0 1-1.369.491l-1.217-.456c-.355-.133-.75-.072-1.076.124a6.47 6.47 0 0 1-.22.128c-.331.183-.581.495-.644.869l-.213 1.281c-.09.543-.56.94-1.110.94h-2.594c-.55 0-1.019-.398-1.11-.94l-.213-1.281c-.062-.374-.312-.686-.644-.87a6.52 6.52 0 0 1-.22-.127c-.325-.196-.72-.257-1.076-.124l-1.217.456a1.125 1.125 0 0 1-1.369-.49l-1.297-2.247a1.125 1.125 0 0 1 .26-1.431l1.004-.827c.292-.24.437-.613.43-.991a6.932 6.932 0 0 1 0-.255c.007-.38-.138-.751-.43-.992l-1.004-.827a1.125 1.125 0 0 1-.26-1.43l1.297-2.247a1.125 1.125 0 0 1 1.37-.491l1.216.456c.356.133.751.072 1.076-.124.072-.044.146-.086.22-.128.332-.183.582-.495.644-.869l.214-1.28Z M15 12a3 3 0 1 1-6 0 3 3 0 0 1 6 0Z"/></svg>
<div class="t" style="left:1134px;top:641.30px;font-size:15px;color:#18181b;font-weight:normal;letter-spacing:0px;-webkit-text-stroke:0.25px currentColor;">Settings</div>
<svg class="a" style="left:1213px;top:641px;" width="16" height="16" viewBox="0 0 24 24" fill="none" stroke="#b8480b" stroke-width="1.5" stroke-linecap="round" stroke-linejoin="round"><path d="M18.364 18.364A9 9 0 0 0 5.636 5.636m12.728 12.728A9 9 0 0 1 5.636 5.636m12.728 12.728L5.636 5.636"/></svg>
<div class="t" style="left:1232.5px;top:641.13px;font-size:15.2px;color:#b8480b;font-weight:normal;letter-spacing:-0.25px;-webkit-text-stroke:0.3px currentColor;">Disable</div>
<svg class="a" style="left:1294px;top:641px;" width="16" height="16" viewBox="0 0 24 24" fill="none" stroke="#e1060e" stroke-width="1.5" stroke-linecap="round" stroke-linejoin="round"><path d="m14.74 9-.346 9m-4.788 0L9.26 9m9.968-3.21c.342.052.682.107 1.022.166m-1.022-.165L18.16 19.673a2.25 2.25 0 0 1-2.244 2.077H8.084a2.25 2.25 0 0 1-2.244-2.077L4.772 5.79m14.456 0a48.108 48.108 0 0 0-3.478-.397m-12 .562c.34-.059.68-.114 1.022-.165m0 0a48.11 48.11 0 0 1 3.478-.397m7.5 0v-.916c0-1.18-.91-2.164-2.09-2.201a51.964 51.964 0 0 0-3.32 0c-1.18.037-2.09 1.022-2.09 2.201v.916m7.5 0a48.667 48.667 0 0 0-7.5 0"/></svg>
<div class="t" style="left:1314px;top:641.13px;font-size:15.2px;color:#e1060e;font-weight:normal;letter-spacing:-0.25px;-webkit-text-stroke:0.3px currentColor;">Delete</div>
<div class="a" style="left:352px;top:689px;width:1016px;height:1px;background:#e4e4e7"></div>
<div class="t" style="left:376px;top:712.39px;font-size:14.9px;color:#3f3f46;font-weight:normal;letter-spacing:0px;-webkit-text-stroke:0.25px currentColor;">Showing 1 to 3 of 3 results</div>
<div class="a" style="left:786px;top:701px;width:148px;height:38px;background:#fff;border:1px solid #e2e2e5;box-shadow:0 1px 2px rgba(0,0,0,.05)"></div>
<div class="a" style="left:870px;top:702px;width:1px;height:36px;background:#e4e4e7"></div>
<div class="t" style="left:799px;top:712.30px;font-size:15px;color:#71717a;font-weight:normal;letter-spacing:0px;">Per page</div>
<div class="t" style="left:882.5px;top:712.30px;font-size:15px;color:#18181b;font-weight:normal;letter-spacing:-0.8px;">10</div>
<svg class="a" style="left:907.5px;top:713.5px;" width="14" height="14" viewBox="0 0 24 24" fill="none" stroke="#52525b" stroke-width="2.2" stroke-linecap="round" stroke-linejoin="round"><path d="m19.5 8.25-7.5 7.5-7.5-7.5"/></svg>
<div class="a" style="left:320px;top:782px;width:1080px;height:1px;background:#e6e6e8"></div>
</body></html>
